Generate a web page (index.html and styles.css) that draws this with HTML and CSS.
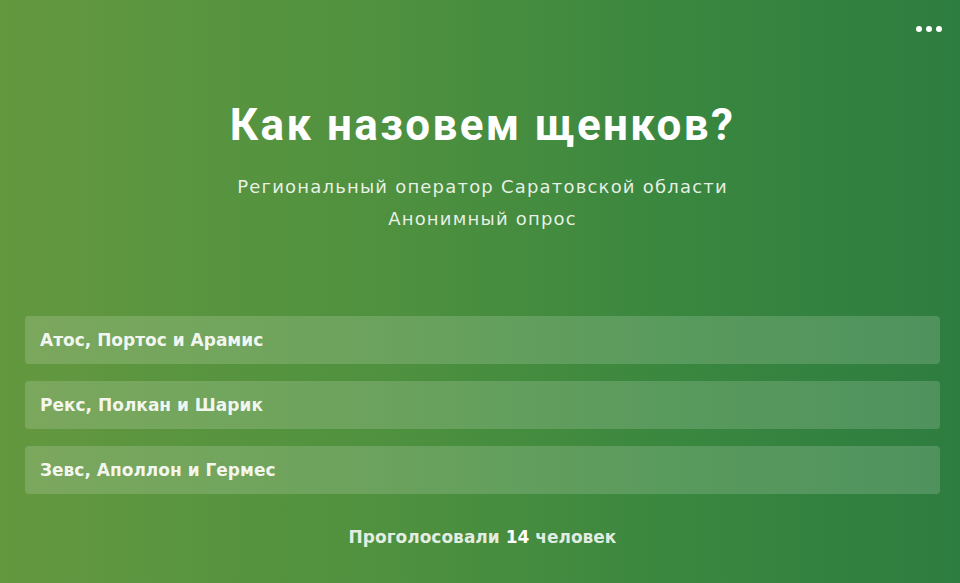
FILE: index.html
```html
<!DOCTYPE html>
<html lang="ru">
<head>
<meta charset="utf-8">
<link rel="stylesheet" href="styles.css">
</head>
<body>
<div class="poll">
  <div class="more"><span></span><span></span><span></span></div>
  <header class="head">
    <h1 class="title">Как назовем щенков?</h1>
    <p class="sub">Региональный оператор Саратовской области</p>
    <p class="sub">Анонимный опрос</p>
  </header>
  <div class="options">
    <div class="option">Атос, Портос и Арамис</div>
    <div class="option">Рекс, Полкан и Шарик</div>
    <div class="option">Зевс, Аполлон и Гермес</div>
  </div>
  <div class="footer">Проголосовали <b>14</b> человек</div>
</div>
</body>
</html>
```
FILE: styles.css
```css
html, body { margin: 0; padding: 0; }
body { width: 960px; height: 583px; overflow: hidden; font-family: "DejaVu Sans", Roboto, sans-serif; }
.poll {
  position: relative;
  box-sizing: border-box;
  width: 960px; height: 583px;
  background: linear-gradient(90deg, #64983f 0%, #4f913f 40%, #3a873f 70%, #2e7d40 100%);
  color: #fff;
  padding: 97px 20px 0 25px;
  display: flex; flex-direction: column;
}
.more { position: absolute; top: 26px; right: 18px; display: flex; gap: 4px; }
.more span { width: 6px; height: 6px; border-radius: 50%; background: #fff; }
.head { text-align: center; }
.title { margin: 0 0 18px; font-family: Roboto, "Liberation Sans", sans-serif; font-size: 44px; font-weight: 700; line-height: 56px; letter-spacing: 2.4px; }
.sub { margin: 0; font-size: 18px; line-height: 32px; letter-spacing: 1.2px; color: rgba(255,255,255,0.88); }
.options { margin-top: 81px; display: flex; flex-direction: column; gap: 17px; }
.option {
  height: 48px; box-sizing: border-box; padding: 0 15px;
  display: flex; align-items: center;
  background: rgba(255,255,255,0.16);
  border-radius: 4px;
  font-size: 17px; font-weight: 700; color: rgba(255,255,255,0.92);
}
.footer { margin-top: 33px; text-align: center; font-size: 17px; font-weight: 700; color: rgba(255,255,255,0.85); }
.footer b { font-weight: 700; color: #fff; }
```
